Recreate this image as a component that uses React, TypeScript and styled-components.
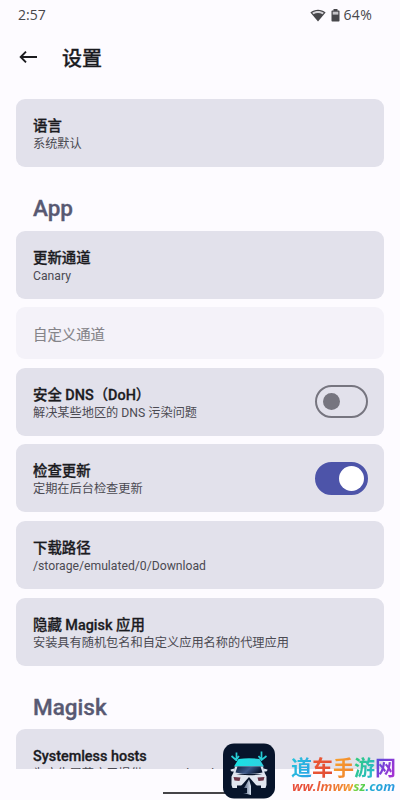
import React from "react";
import styled, { createGlobalStyle } from "styled-components";

const GlobalStyle = createGlobalStyle`
  * { box-sizing: border-box; }
  body {
    margin: 0;
    background: #fdfbff;
    font-family: Roboto, "Noto Sans CJK SC", sans-serif;
    color: #1b1b1f;
  }
`;

const Screen = styled.div`
  position: relative;
  width: 400px;
  height: 800px;
  overflow: hidden;
  background: #fdfbff;
  display: flex;
  flex-direction: column;
`;

const StatusBar = styled.div`
  height: 30px;
  padding: 0 28px 0 18px;
  display: flex;
  align-items: center;
  justify-content: space-between;
  font: 14px/30px "Open Sans", "Noto Sans", sans-serif;
  color: #47474b;
  flex: none;
`;

const StatusIcons = styled.div`
  display: flex;
  align-items: center;
`;

const Battery = styled.svg`
  margin-left: 5px;
`;

const Percent = styled.span`
  margin: 0 0 0 4px;
  letter-spacing: 0.3px;
`;

const Header = styled.header`
  height: 69px;
  flex: none;
  display: flex;
  align-items: flex-start;
  padding: 13px 0 0 18px;
`;

const BackButton = styled.div`
  width: 44px;
  height: 28px;
  display: flex;
  align-items: center;
`;

const PageTitle = styled.h1`
  margin: 2px 0 0;
  font-size: 20px;
  line-height: 28px;
  font-weight: 500;
  color: #1b1b1f;
  -webkit-text-stroke: 0.3px currentColor;
`;

const Content = styled.main`
  height: 670px;
  flex: none;
  overflow: hidden;
  padding: 0 16px;
`;

const Group = styled.section`
  display: flex;
  flex-direction: column;
  gap: 8.7px;
`;

const GroupTitle = styled.h2<{ $height: number }>`
  margin: 0;
  height: ${(p) => p.$height}px;
  padding: 27px 0 0 17px;
  font-size: 22.5px;
  line-height: 28px;
  font-weight: 500;
  color: #585972;
  -webkit-text-stroke: 0.35px currentColor;
`;

const Card = styled.div<{ $muted?: boolean }>`
  height: ${(p) => (p.$muted ? 51.6 : 68)}px;
  flex: none;
  border-radius: 9px;
  padding: 0 16px 0 17px;
  background: ${(p) => (p.$muted ? "#f4f2f9" : "#e2e1eb")};
  color: ${(p) => (p.$muted ? "#858489" : "#1b1b1f")};
  display: flex;
  align-items: center;
  justify-content: space-between;
`;

const CardBody = styled.div`
  padding-top: 5px;
`;

const CardTitle = styled.div<{ $light?: boolean }>`
  font-size: 14.4px;
  line-height: 18px;
  font-weight: ${(p) => (p.$light ? 400 : 500)};
  -webkit-text-stroke: ${(p) => (p.$light ? 0.15 : 0.3)}px currentColor;
  white-space: nowrap;
`;

const CardText = styled.div`
  font-size: 12.2px;
  line-height: 17px;
  color: #4b4a52;
  white-space: nowrap;
`;

const Switch = styled.div<{ $on?: boolean }>`
  width: 53px;
  height: 33px;
  flex: none;
  border-radius: 17px;
  border: 2px solid ${(p) => (p.$on ? "#4d54a9" : "#76757f")};
  background: ${(p) => (p.$on ? "#4d54a9" : "transparent")};
  padding: 0 ${(p) => (p.$on ? 2 : 6)}px;
  display: flex;
  align-items: center;
  justify-content: ${(p) => (p.$on ? "flex-end" : "flex-start")};
`;

const Knob = styled.div<{ $on?: boolean }>`
  width: ${(p) => (p.$on ? 25 : 17)}px;
  height: ${(p) => (p.$on ? 25 : 17)}px;
  border-radius: 50%;
  background: ${(p) => (p.$on ? "#fff" : "#76757f")};
`;

const HomeIndicator = styled.div`
  width: 73px;
  height: 2px;
  margin: 22.5px 0 0 163px;
  background: #454448;
`;

const Watermark = styled.div`
  position: absolute;
  left: 223px;
  top: 743px;
  display: flex;
`;

const Brand = styled.div`
  margin: 10px 0 0 16px;
  width: 106px;
`;

const BrandName = styled.div`
  display: flex;
  font: 700 21px/27px "Noto Sans CJK SC", sans-serif;
`;

const Tint = styled.span<{ $from: string; $to: string }>`
  color: transparent;
  background: linear-gradient(120deg, ${(p) => p.$from}, ${(p) => p.$to});
  background-clip: text;
  -webkit-background-clip: text;
`;

const BrandUrl = styled.div`
  display: flex;
  font: italic 700 13.2px/15px "Open Sans", sans-serif;
  margin: -1px 0 0 1px;
`;

type RowProps = { title: string; text?: string; muted?: boolean; toggle?: boolean };

const Row = ({ title, text, muted, toggle }: RowProps) => (
  <Card $muted={muted}>
    <CardBody>
      <CardTitle $light={muted}>{title}</CardTitle>
      {text && <CardText>{text}</CardText>}
    </CardBody>
    {toggle !== undefined && (
      <Switch $on={toggle}>
        <Knob $on={toggle} />
      </Switch>
    )}
  </Card>
);

const WifiIcon = () => (
  <svg width="16" height="13" viewBox="0 0 16 13">
    <path d="M.4 3.400C4.800-.2 11.200-.2 15.600 3.400L8 12.600Z" fill="#47474b" />
    <path d="M2.200 3.800C5.700 1.300 10.300 1.300 13.800 3.800L12.600 5.300C9.700 3.500 6.300 3.500 3.400 5.300Z" fill="#d5d3d8" />
  </svg>
);

const BatteryIcon = () => (
  <Battery width="9" height="13" viewBox="0 0 9 13">
    <path d="M2.500 0h4v1.400h1.300q.7 0 .7.700v9.700q0 .7-.7.700H1.200q-.7 0-.7-.7V2.100q0-.7.7-.7h1.300Z" fill="#47474b" />
    <path d="M1.700 2.700h5.600v2.900H1.700Z" fill="#c5c4c8" />
  </Battery>
);

const ArrowIcon = () => (
  <svg width="20" height="14" viewBox="0 0 20 14" fill="none" stroke="#1b1b1f" strokeWidth="1.900">
    <path d="M19 7H3M8 1.700 2.700 7 8 12.300" />
  </svg>
);

const CarLogo = () => (
  <svg width="52" height="56" viewBox="0 0 52 56">
    <defs>
      <linearGradient id="roof" x2="1">
        <stop offset="0" stopColor="#18e4e5" />
        <stop offset="1" stopColor="#30cfe0" />
      </linearGradient>
      <linearGradient id="windshield" x2="1" y2=".3">
        <stop offset="0" stopColor="#10223f" />
        <stop offset=".55" stopColor="#3b5788" />
        <stop offset="1" stopColor="#0a1731" />
      </linearGradient>
      <linearGradient id="road" x2="1">
        <stop offset="0" stopColor="#41516f" />
        <stop offset="1" stopColor="#dbe6f5" />
      </linearGradient>
    </defs>
    <rect y=".5" width="52" height="55" rx="11" fill="#07142b" />
    <g fill="none" stroke="#27ced5" strokeWidth="1.700">
      <path d="M13.500 9.500V18M8.500 13l4.500 4 3-4M38.500 8.500V17M35.500 13l3 4 5-4" />
    </g>
    <path d="M15.500 16Q26 14.500 36.500 16L41 23.500H11Z" fill="url(#roof)" />
    <path d="M12 23.500h28l2 7.500H10Z" fill="#dce3ef" />
    <path d="M14.500 23.500h23l2 6q-13.500 3-27 0Z" fill="url(#windshield)" />
    <path d="M7.500 26.500l4-1v3H9q-1.500 0-1.500-2ZM44.500 26.500l-4-1v3H43q1.500 0 1.500-2Z" fill="#dce3ef" />
    <path d="M10 30.500q16 3.500 32 0l1.500 3V42l-1 3H38v-2.500H14V45H9.500l-1-3v-8.500Z" fill="#e1e6f0" />
    <path d="M10.500 34l7 .5-1 3.500-5-.5ZM41.500 34l-7 .5 1 3.500 5-.5Z" fill="#6d3547" />
    <path d="M26 34l8 9H18Z" fill="#07142b" />
    <path d="M26 36.500 21 45h3v5h-4l8 2V43Z" fill="url(#road)" />
  </svg>
);

export default function App() {
  return (
    <Screen>
      <GlobalStyle />
      <StatusBar>
        <span>2:57</span>
        <StatusIcons>
          <WifiIcon />
          <BatteryIcon />
          <Percent>64%</Percent>
        </StatusIcons>
      </StatusBar>
      <Header>
        <BackButton>
          <ArrowIcon />
        </BackButton>
        <PageTitle>设置</PageTitle>
      </Header>
      <Content>
        <Group>
          <Row title="语言" text="系统默认" />
        </Group>
        <GroupTitle $height={63.7}>App</GroupTitle>
        <Group>
          <Row title="更新通道" text="Canary" />
          <Row title="自定义通道" muted />
          <Row title="安全 DNS（DoH）" text="解决某些地区的 DNS 污染问题" toggle={false} />
          <Row title="检查更新" text="定期在后台检查更新" toggle={true} />
          <Row title="下载路径" text="/storage/emulated/0/Download" />
          <Row title="隐藏 Magisk 应用" text="安装具有随机包名和自定义应用名称的代理应用" />
        </Group>
        <GroupTitle $height={63.5}>Magisk</GroupTitle>
        <Group>
          <Row title="Systemless hosts" text="为广告屏蔽应用提供 Systemless hosts 支持" />
        </Group>
      </Content>
      <HomeIndicator />
      <Watermark>
        <CarLogo />
        <Brand>
          <BrandName>
            <Tint $from="#27c9d8" $to="#2b9de8">道</Tint>
            <Tint $from="#ee5a32" $to="#df4937">车</Tint>
            <Tint $from="#f9a52b" $to="#ef7d32">手</Tint>
            <Tint $from="#32cf69" $to="#25b5df">游</Tint>
            <Tint $from="#4a50dc" $to="#b42bd1">网</Tint>
          </BrandName>
          <BrandUrl>
            <Tint $from="#e84c38" $to="#e8533a">ww.</Tint>
            <Tint $from="#e8533a" $to="#f5a02e">lmww</Tint>
            <Tint $from="#a5d631" $to="#39cc62">sz</Tint>
            <Tint $from="#22b5cf" $to="#2b94e2">.com</Tint>
          </BrandUrl>
        </Brand>
      </Watermark>
    </Screen>
  );
}
